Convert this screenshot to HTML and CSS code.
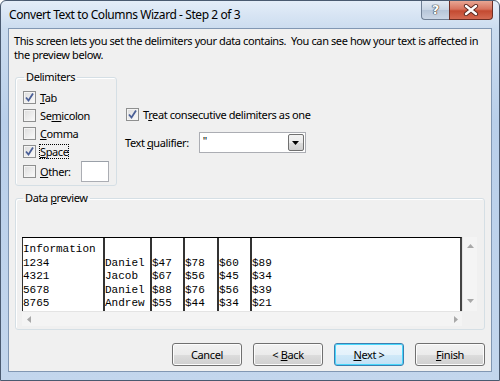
FILE: index.html
```html
<!DOCTYPE html>
<html lang="en">
<head>
    <meta charset="UTF-8">
    <title>Convert Text to Columns Wizard - Step 2 of 3</title>
    <link rel="stylesheet" href="styles.css">
</head>
<body>
    <div class="window">
        <div class="titlebar">
            <span class="title">Convert Text to Columns Wizard - Step 2 of 3</span>
            <div class="caption-btns">
                <div class="cap-help">?</div>
                <div class="cap-close">
                    <svg width="16" height="12" viewBox="0 0 16 12">
                        <path d="M3 2 L13 10 M13 2 L3 10" stroke="#5a2a22" stroke-width="4.2" stroke-linecap="round"/>
                        <path d="M3 2 L13 10 M13 2 L3 10" stroke="#fff" stroke-width="2.4" stroke-linecap="round"/>
                    </svg>
                </div>
            </div>
        </div>
        <div class="client">
            <p class="intro">This screen lets you set the delimiters your data contains.&nbsp; You can see how your text is affected in the preview below.</p>

            <div class="middle">
                <fieldset class="group delims">
                    <legend>Delimiters</legend>
                    <div class="row"><span class="cb checked"></span><span><u>T</u>ab</span></div>
                    <div class="row"><span class="cb"></span><span>Se<u>m</u>icolon</span></div>
                    <div class="row"><span class="cb"></span><span><u>C</u>omma</span></div>
                    <div class="row"><span class="cb checked"></span><span class="focus"><u>S</u>pace</span></div>
                    <div class="row other"><span class="cb"></span><span><u>O</u>ther:</span><span class="textbox"></span></div>
                </fieldset>

                <div class="options">
                    <div class="row"><span class="cb checked"></span><span>T<u>r</u>eat consecutive delimiters as one</span></div>
                    <div class="qual">
                        <span>Text <u>q</u>ualifier:</span>
                        <div class="combo">
                            <span class="combo-val">"</span>
                            <span class="combo-btn"><svg width="7" height="4" viewBox="0 0 7 4"><path d="M0 0 H7 L3.5 4 Z" fill="#000"/></svg></span>
                        </div>
                    </div>
                </div>
            </div>

            <fieldset class="group preview-group">
                <legend>Data <u>p</u>review</legend>
                <div class="preview">
                    <div class="sheet">
                        <div class="col" style="width: 81px">Information<br>1234<br>4321<br>5678<br>8765</div>
                        <div class="col" style="width: 47px">&nbsp;<br>Daniel<br>Jacob<br>Daniel<br>Andrew</div>
                        <div class="col" style="width: 33px">&nbsp;<br>$47<br>$67<br>$88<br>$55</div>
                        <div class="col" style="width: 34px">&nbsp;<br>$78<br>$56<br>$76<br>$44</div>
                        <div class="col" style="width: 33px">&nbsp;<br>$60<br>$45<br>$56<br>$34</div>
                        <div class="col last">&nbsp;<br>$89<br>$34<br>$39<br>$21</div>
                    </div>
                    <div class="vscroll">
                        <svg width="7" height="4" viewBox="0 0 7 4"><path d="M0 4 H7 L3.5 0 Z" fill="#a8a8a8"/></svg>
                        <svg width="7" height="4" viewBox="0 0 7 4"><path d="M0 0 H7 L3.5 4 Z" fill="#a8a8a8"/></svg>
                    </div>
                    <div class="hscroll">
                        <svg width="4" height="7" viewBox="0 0 4 7"><path d="M4 0 V7 L0 3.5 Z" fill="#a8a8a8"/></svg>
                        <svg width="4" height="7" viewBox="0 0 4 7"><path d="M0 0 V7 L4 3.5 Z" fill="#a8a8a8"/></svg>
                    </div>
                    <div class="corner"></div>
                </div>
            </fieldset>

            <div class="buttons">
                <button class="btn">Cancel</button>
                <button class="btn">&lt; <u>B</u>ack</button>
                <button class="btn default"><u>N</u>ext &gt;</button>
                <button class="btn"><u>F</u>inish</button>
            </div>
        </div>
    </div>
</body>
</html>
```

FILE: styles.css
```css
*{
    box-sizing: border-box;
}
body{
    margin: 0;
    background: #fff;
    font-family: "Segoe UI", "Noto Sans", "Open Sans", sans-serif;
    font-size: 11px;
    letter-spacing: -0.4px;
    color: #000;
}
.window{
    width: 500px;
    height: 381px;
    padding: 0 7px 8px 7px;
    display: flex;
    flex-direction: column;
    border: 1px solid #4a5a70;
    border-radius: 6px 6px 0 0;
    background: linear-gradient(to bottom, #e4edf8 0, #cbdcef 28px, #b9cfea 120px, #c3d6ed 381px);
    overflow: hidden;
}
.titlebar{
    height: 27px;
    display: flex;
    align-items: flex-start;
    justify-content: space-between;
}
.title{
    font-size: 12px;
    letter-spacing: -0.42px;
    margin-top: 5px;
    padding-left: 1px;
}
.caption-btns{
    display: flex;
    margin-right: -1px;
}
.cap-help{
    width: 28px;
    height: 19px;
    border: 1px solid #6f7f94;
    border-top: none;
    border-right: none;
    border-radius: 0 0 0 4px;
    background: linear-gradient(to bottom, #e3eaf3, #c9d5e4 50%, #b6c5d8 51%, #cbd7e6);
    color: #fff;
    font: bold 13px "DejaVu Sans", sans-serif;
    letter-spacing: 0;
    text-align: center;
    line-height: 18px;
    text-shadow: 0 0 1px #333, 0 0 1px #333, 0 0 1px #333;
}
.cap-close{
    width: 44px;
    height: 19px;
    border: 1px solid #6e2e24;
    border-top: none;
    border-radius: 0 0 4px 0;
    background: linear-gradient(to bottom, #e8a693, #d7735e 45%, #c44a31 55%, #d46a52);
    display: flex;
    align-items: center;
    justify-content: center;
}
.client{
    flex: 1;
    background: #f0f0f0;
    border: 1px solid #8197b3;
    display: flex;
    flex-direction: column;
}
u{
    text-decoration: underline;
    text-underline-offset: 1px;
}
.intro{
    margin: 5px 8px 0 5px;
    line-height: 14px;
}
.middle{
    display: flex;
    margin-top: 8px;
}
.group{
    margin: 0;
    border: 1px solid #d5dfe5;
    border-radius: 3px;
    box-shadow: inset 1px 1px 0 #fff;
}
.group legend{
    padding: 0 2px;
    margin-left: 1px;
    line-height: 14px;
}
.delims{
    width: 102px;
    margin-left: 6px;
    padding: 4px 0 3px 7px;
}
.row{
    display: flex;
    align-items: center;
    height: 18px;
    gap: 4px;
}
.row.other{
    height: 22px;
}
.cb{
    width: 13px;
    height: 13px;
    flex: none;
    border: 1px solid #8e8f8f;
    background: linear-gradient(135deg, #dcdcdc, #fbfbfb);
    box-shadow: inset 0 0 0 1px #f4f4f4;
}
.cb.checked{
    background: url("data:image/svg+xml;utf8,<svg xmlns='http://www.w3.org/2000/svg' width='11' height='11'><path d='M2 5.5 L4.5 8.5 L9 1.5' fill='none' stroke='%234a5f97' stroke-width='1.8'/></svg>") center no-repeat, linear-gradient(135deg, #dcdcdc, #fbfbfb);
}
.focus{
    outline: 1px dotted #000;
    outline-offset: 0;
    line-height: 13px;
}
.textbox{
    width: 28px;
    height: 21px;
    margin-left: 6px;
    background: #fff;
    border: 1px solid #abadb3;
    border-top-color: #9aa0a8;
}
.options{
    margin-left: 9px;
    padding-top: 35px;
}
.qual{
    display: flex;
    align-items: center;
    margin-top: 9px;
    margin-left: -1px;
}
.combo{
    width: 107px;
    height: 21px;
    margin-left: 10px;
    display: flex;
    background: #fff;
    border: 1px solid #abadb3;
}
.combo-val{
    flex: 1;
    padding-left: 3px;
    line-height: 15px;
}
.combo-btn{
    width: 16px;
    margin: 1px;
    display: flex;
    align-items: center;
    justify-content: center;
    border: 1px solid #707070;
    border-radius: 2px;
    background: linear-gradient(to bottom, #f2f2f2, #ebebeb 50%, #dddddd 51%, #cfcfcf);
}
.preview-group{
    margin: 5px 6px 0 6px;
    padding: 32px 0 3px 6px;
}
.preview{
    display: grid;
    grid-template-columns: 440px 15px;
    grid-template-rows: 74px 15px;
}
.sheet{
    display: flex;
    overflow: hidden;
    background: #fff;
    border-top: 1px solid #000;
    border-right: 2px solid #444;
    font-family: "Liberation Mono", "Courier New", monospace;
    font-size: 11px;
    letter-spacing: 0;
    line-height: 13.5px;
    color: #000;
}
.col{
    flex: none;
    height: 100%;
    border-left: 2px solid #333;
    padding-top: 5px;
    white-space: nowrap;
    overflow: hidden;
}
.col:first-child{
    border-left-width: 1px;
}
.col.last{
    flex: 1;
}
.vscroll{
    background: #f4f4f4;
    border-left: 1px solid #e4e4e4;
    display: flex;
    flex-direction: column;
    justify-content: space-between;
    align-items: center;
    padding: 7px 0 8px 0;
}
.hscroll{
    background: #f4f4f4;
    border-top: 1px solid #e4e4e4;
    display: flex;
    justify-content: space-between;
    align-items: center;
    padding: 0 4px 0 5px;
}
.corner{
    background: #f0f0f0;
}
.buttons{
    display: flex;
    justify-content: flex-end;
    gap: 11px;
    margin: 13px 6px 0 0;
}
.btn{
    width: 70px;
    height: 23px;
    padding: 0;
    font: 11px "Segoe UI", "Noto Sans", sans-serif;
    letter-spacing: -0.36px;
    color: #000;
    border: 1px solid #707070;
    border-radius: 3px;
    background: linear-gradient(to bottom, #f2f2f2, #ebebeb 50%, #dddddd 51%, #cfcfcf);
    box-shadow: inset 0 0 0 1px #fcfcfc;
}
.btn.default{
    border-color: #3c7fb1;
    box-shadow: inset 0 0 0 1px #48d7fb;
    background: linear-gradient(to bottom, #eaf6fd, #e4f2fb 50%, #d0e9f8 51%, #c2e1f6);
}
```
